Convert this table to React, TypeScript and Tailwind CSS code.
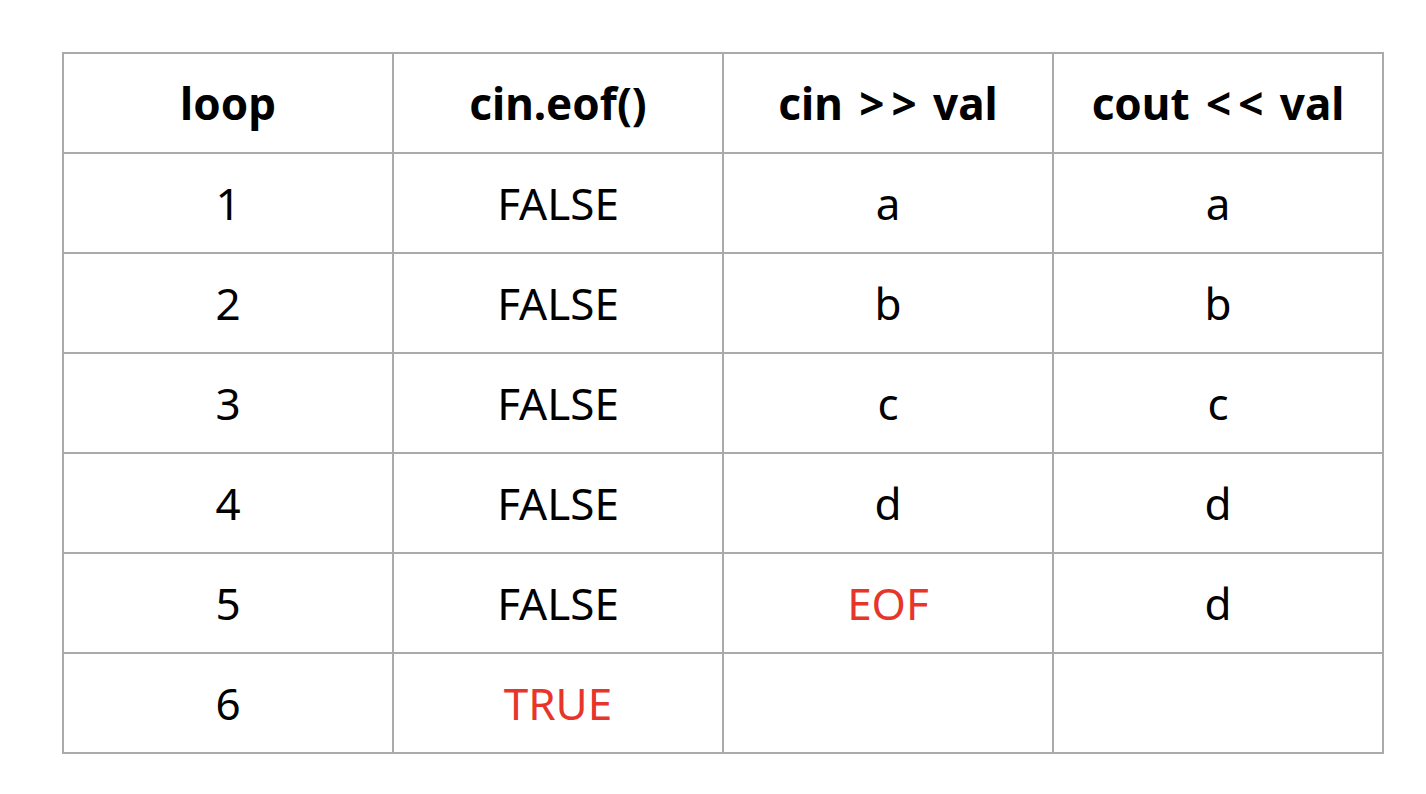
import type { ReactNode } from "react";

const header: ReactNode[] = [
  "loop",
  "cin.eof()",
  <>
    cin{" "}
    <span className="mx-[5px]">
      <span className="tracking-[7px]">&gt;</span>&gt;
    </span>{" "}
    val
  </>,
  <>
    cout{" "}
    <span className="mx-[5px]">
      <span className="tracking-[7px]">&lt;</span>&lt;
    </span>{" "}
    val
  </>,
];

type Cell = { text: string; red?: boolean };

const rows: Cell[][] = [
  [{ text: "1" }, { text: "FALSE" }, { text: "a" }, { text: "a" }],
  [{ text: "2" }, { text: "FALSE" }, { text: "b" }, { text: "b" }],
  [{ text: "3" }, { text: "FALSE" }, { text: "c" }, { text: "c" }],
  [{ text: "4" }, { text: "FALSE" }, { text: "d" }, { text: "d" }],
  [{ text: "5" }, { text: "FALSE" }, { text: "EOF", red: true }, { text: "d" }],
  [{ text: "6" }, { text: "TRUE", red: true }, { text: "" }, { text: "" }],
];

export default function App() {
  return (
    <div className="h-[794px] w-[1426px] bg-white pt-[52px] pl-[62px] font-['Noto_Sans',sans-serif] text-black">
      <table className="border-collapse">
        <thead>
          <tr>
            {header.map((h, i) => (
              <th
                key={i}
                className="h-[100px] w-[330px] border-2 border-[#aaaaaa] p-0 text-center text-[44px] font-bold"
              >
                {h}
              </th>
            ))}
          </tr>
        </thead>
        <tbody>
          {rows.map((row, i) => (
            <tr key={i}>
              {row.map((c, j) => (
                <td
                  key={j}
                  className={
                    "h-[100px] w-[330px] border-2 border-[#aaaaaa] p-0 text-center text-[44px] " +
                    (c.red ? "text-[#e8352a]" : "")
                  }
                >
                  {c.text}
                </td>
              ))}
            </tr>
          ))}
        </tbody>
      </table>
    </div>
  );
}
